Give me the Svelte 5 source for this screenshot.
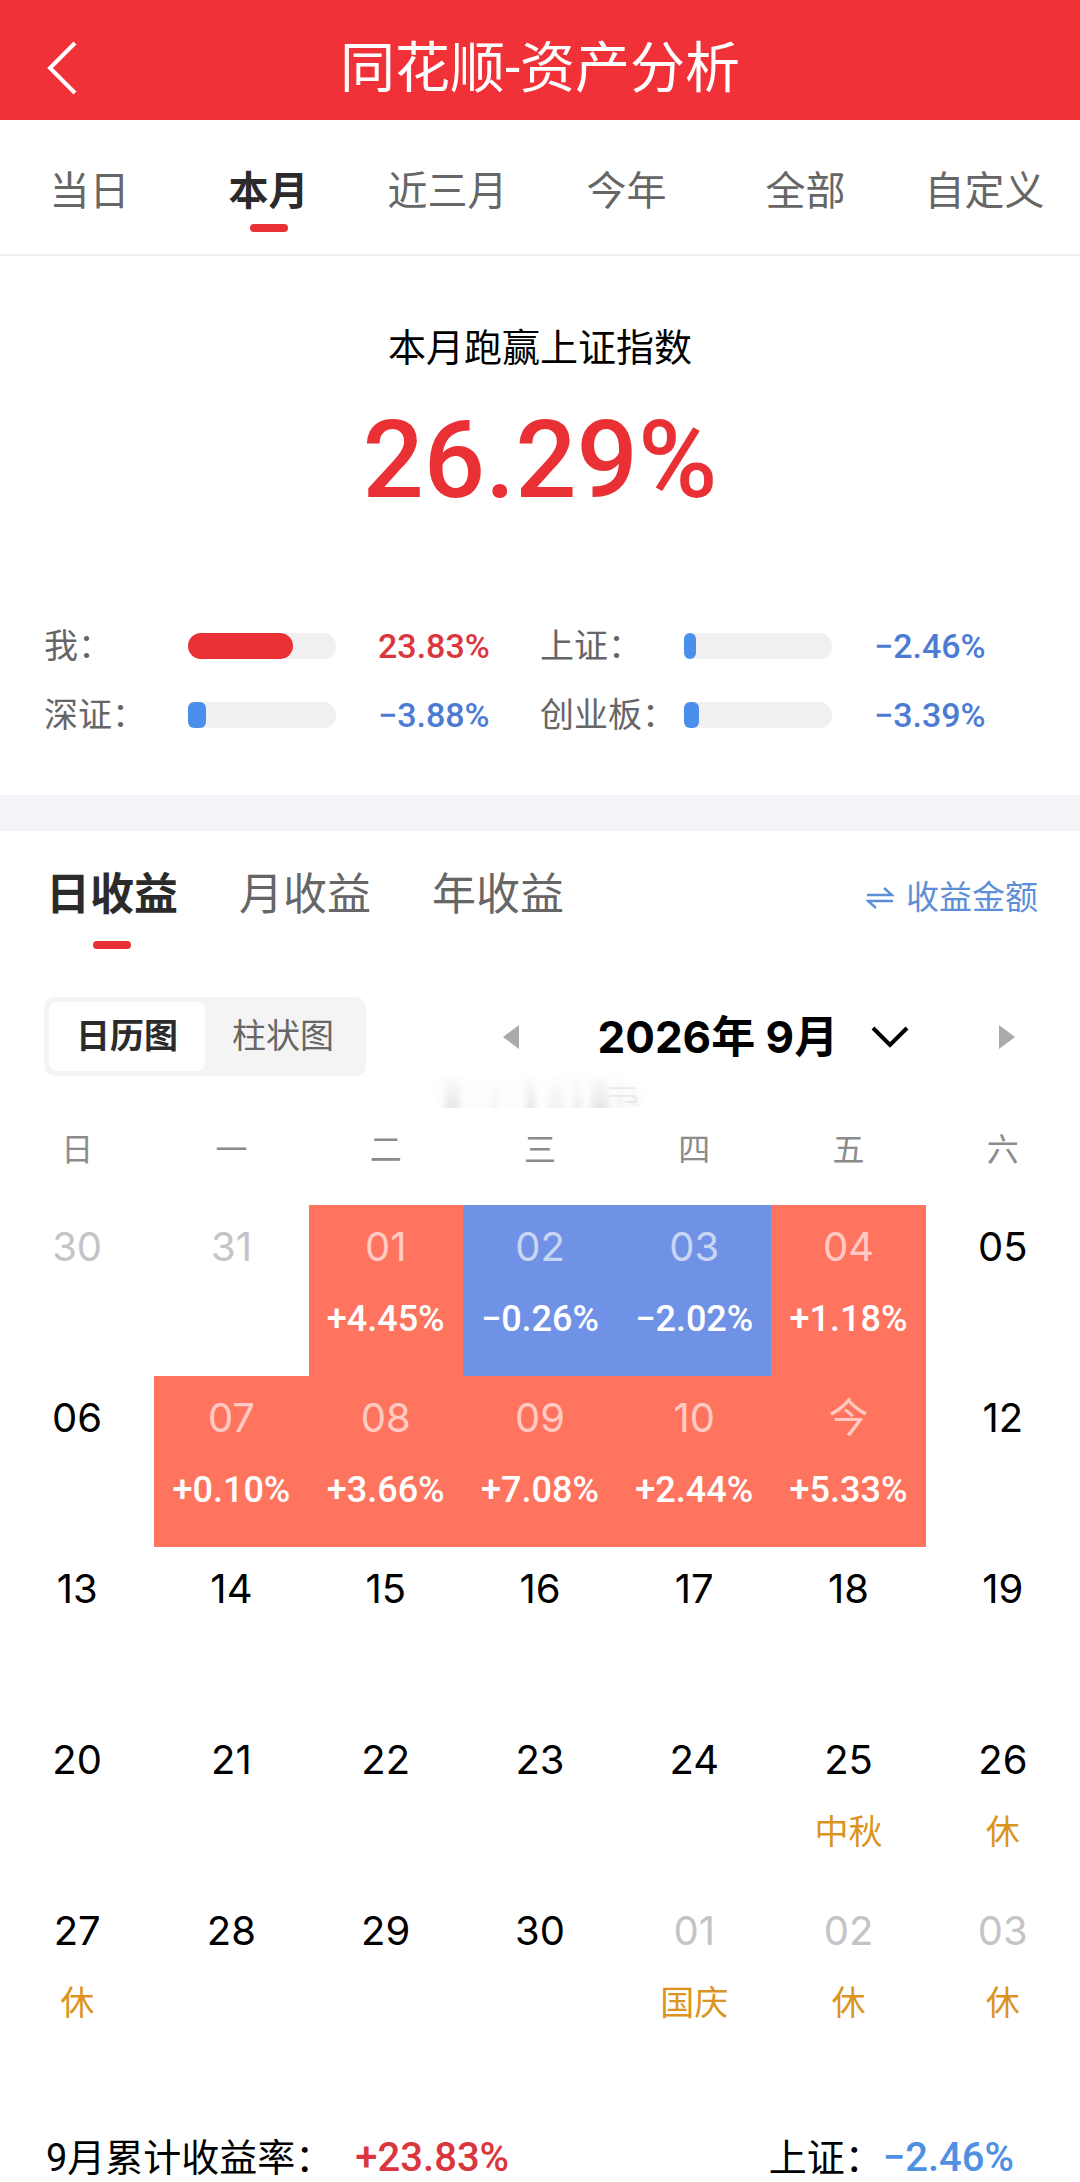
<script lang="ts">
	type Day = {
		label: string;
		rate?: string;
		note?: string;
		muted?: boolean;
	};

	const ranges = ['当日', '本月', '近三月', '今年', '全部', '自定义'];
	const periods = ['日收益', '月收益', '年收益'];
	const charts = ['日历图', '柱状图'];
	const weekdays = ['日', '一', '二', '三', '四', '五', '六'];

	// fill is the share of the track that is coloured, in percent
	const benchmarks = [
		{ name: '我', value: '23.83%', fill: 71 },
		{ name: '上证', value: '−2.46%', fill: 8 },
		{ name: '深证', value: '−3.88%', fill: 12 },
		{ name: '创业板', value: '−3.39%', fill: 10 }
	];

	const weeks: Day[][] = [
		[
			{ label: '30', muted: true },
			{ label: '31', muted: true },
			{ label: '01', rate: '+4.45%' },
			{ label: '02', rate: '−0.26%' },
			{ label: '03', rate: '−2.02%' },
			{ label: '04', rate: '+1.18%' },
			{ label: '05' }
		],
		[
			{ label: '06' },
			{ label: '07', rate: '+0.10%' },
			{ label: '08', rate: '+3.66%' },
			{ label: '09', rate: '+7.08%' },
			{ label: '10', rate: '+2.44%' },
			{ label: '今', rate: '+5.33%' },
			{ label: '12' }
		],
		['13', '14', '15', '16', '17', '18', '19'].map((label) => ({ label })),
		[
			{ label: '20' },
			{ label: '21' },
			{ label: '22' },
			{ label: '23' },
			{ label: '24' },
			{ label: '25', note: '中秋' },
			{ label: '26', note: '休' }
		],
		[
			{ label: '27', note: '休' },
			{ label: '28' },
			{ label: '29' },
			{ label: '30' },
			{ label: '01', note: '国庆', muted: true },
			{ label: '02', note: '休', muted: true },
			{ label: '03', note: '休', muted: true }
		]
	];

	let range = $state('本月');
	let period = $state('日收益');
	let chart = $state('日历图');
	let month = $state('2026-09');

	function isLoss(value: string) {
		return value.startsWith('−');
	}
</script>

<header class="topbar">
	<button class="back" aria-label="返回">
		<svg width="32" height="56" viewBox="0 0 32 56">
			<path d="M29 3 4 28l25 25" fill="none" stroke="currentColor" stroke-width="4" />
		</svg>
	</button>
	<h1>同花顺-资产分析</h1>
</header>

<nav class="ranges">
	{#each ranges as item}
		<button class:active={range === item} onclick={() => (range = item)}>{item}</button>
	{/each}
</nav>

<section class="summary">
	<p class="headline">本月跑赢上证指数</p>
	<p class="lead">26.29%</p>
	<div class="benchmarks">
		{#each benchmarks as item}
			<div class="benchmark" class:loss={isLoss(item.value)}>
				<span>{item.name}：</span>
				<div class="track">
					<div class="fill" style="width: {item.fill}%"></div>
				</div>
				<span class="value">{item.value}</span>
			</div>
		{/each}
	</div>
</section>

<section class="earnings">
	<div class="periods">
		{#each periods as item}
			<button class:active={period === item} onclick={() => (period = item)}>{item}</button>
		{/each}
		<a class="switch" href="#amount">
			<svg width="28" height="24" viewBox="0 0 28 24">
				<path
					d="M1 9h25L18 2M27 15H2l8 7"
					fill="none"
					stroke="currentColor"
					stroke-width="2.4"
				/>
			</svg>
			收益金额
		</a>
	</div>

	<div class="toolbar">
		<div class="segmented">
			{#each charts as item}
				<button class:active={chart === item} onclick={() => (chart = item)}>{item}</button>
			{/each}
		</div>
		<div class="months">
			<button aria-label="上个月">
				<svg width="18" height="26" viewBox="0 0 18 26">
					<path d="M17 1v24L1 13z" fill="currentColor" />
				</svg>
			</button>
			<div class="month">
				<select aria-label="月份" bind:value={month}>
					<option value="2026-09">2026年 9月</option>
				</select>
				<svg width="38" height="24" viewBox="0 0 38 24">
					<path d="m2 3 17 17L36 3" fill="none" stroke="currentColor" stroke-width="4" />
				</svg>
			</div>
			<button aria-label="下个月">
				<svg width="18" height="26" viewBox="0 0 18 26">
					<path d="M1 1v24l16-12z" fill="currentColor" />
				</svg>
			</button>
		</div>
	</div>

	<svg class="ghost" width="210" height="32" viewBox="0 0 210 32" aria-hidden="true">
		<defs>
			<linearGradient id="fade" x1="0" y1="0" x2="0" y2="1">
				<stop offset="0" stop-color="#999" stop-opacity="0.02" />
				<stop offset="1" stop-color="#999" stop-opacity="0.22" />
			</linearGradient>
			<filter id="soft" x="-5%" y="0" width="110%" height="100%">
				<feGaussianBlur stdDeviation="3 0" />
			</filter>
		</defs>
		<g fill="url(#fade)" filter="url(#soft)">
			<rect width="205" height="32" opacity="0.1" />
			<rect x="10" width="15" height="32" />
			<rect x="56" width="8" height="32" opacity="0.4" />
			<rect x="91" width="9" height="32" />
			<rect x="114" width="14" height="32" opacity="0.5" />
			<rect x="138" width="9" height="32" opacity="0.7" />
			<rect x="156" width="18" height="32" />
			<rect x="182" width="6" height="32" opacity="0.6" />
			<rect x="195" y="6" width="8" height="24" opacity="0.6" />
		</g>
		<path
			d="M174 12h26M174 20h24q6 3 2 6h-10"
			fill="none"
			stroke="#999"
			stroke-opacity="0.16"
			stroke-width="2"
		/>
	</svg>

	<table>
		<thead>
			<tr>
				{#each weekdays as day}
					<th scope="col">{day}</th>
				{/each}
			</tr>
		</thead>
		<tbody>
			{#each weeks as week}
				<tr>
					{#each week as day}
						<td
							class:muted={day.muted}
							class:up={day.rate && !isLoss(day.rate)}
							class:down={day.rate && isLoss(day.rate)}
						>
							<div class="day">{day.label}</div>
							{#if day.rate}
								<div class="rate">{day.rate}</div>
							{:else if day.note}
								<div class="note">{day.note}</div>
							{/if}
						</td>
					{/each}
				</tr>
			{/each}
		</tbody>
	</table>
</section>

<footer class="totals">
	<p>9月累计收益率：<strong class="gain">+23.83%</strong></p>
	<p>上证：<strong>−2.46%</strong></p>
</footer>

<style>
	:global(body) {
		margin: 0;
		background: #fff;
		color: #000;
		font-family: Roboto, 'Noto Sans CJK SC', sans-serif;
	}

	button,
	select {
		margin: 0;
		padding: 0;
		border: none;
		background: none;
		color: inherit;
		font: inherit;
		cursor: pointer;
	}

	h1,
	p {
		margin: 0;
		font-weight: 400;
	}

	svg {
		display: block;
	}

	.topbar {
		display: grid;
		grid-template-columns: 120px 1fr 120px;
		align-items: center;
		height: 104px;
		padding-top: 16px;
		background: #f13138;
		color: #fff;
	}

	.back {
		justify-self: start;
		padding-left: 46px;
	}

	h1 {
		font-size: 55px;
		line-height: 72px;
		text-align: center;
	}

	.ranges {
		display: grid;
		grid-template-columns: repeat(6, 1fr);
		padding: 50px 6px 22px 0;
		border-bottom: 2px solid #f0f0f0;
		color: #666;
		font-size: 40px;
		line-height: 44px;
	}

	.ranges button,
	.periods button {
		display: flex;
		flex-direction: column;
		align-items: center;
		white-space: nowrap;
	}

	.ranges button::after,
	.periods button::after {
		content: '';
		width: 38px;
		height: 8px;
		margin-top: 10px;
		border-radius: 4px;
	}

	.ranges .active,
	.periods .active {
		color: #2b2b2b;
		font-weight: 700;
	}

	.ranges .active::after,
	.periods .active::after {
		background: #e93135;
	}

	.summary {
		padding: 68px 44px 60px;
		border-bottom: 36px solid #f3f4f8;
	}

	.headline {
		font-size: 38px;
		line-height: 48px;
		text-align: center;
	}

	.lead {
		margin-top: 28px;
		color: #e93135;
		font-size: 108px;
		font-weight: 500;
		line-height: 120px;
		text-align: center;
	}

	.benchmarks {
		display: grid;
		grid-template-columns: 1fr 1fr;
		row-gap: 29px;
		margin-top: 106px;
	}

	.benchmark {
		display: grid;
		grid-template-columns: 144px 148px 1fr;
		align-items: center;
		color: #666;
		font-size: 34px;
		line-height: 40px;
		white-space: nowrap;
	}

	.track {
		height: 26px;
		border-radius: 13px;
		background: #f0f0f0;
	}

	.fill {
		height: 100%;
		border-radius: 13px;
		background: #e93135;
	}

	.loss .fill {
		border-radius: 6px;
		background: #4a8fec;
	}

	.value {
		padding-left: 42px;
		color: #d9363e;
		font-weight: 500;
	}

	.loss .value {
		color: #4c7bd4;
	}

	.periods {
		display: flex;
		align-items: baseline;
		gap: 61px;
		padding: 38px 42px 0 46px;
		color: #666;
		font-size: 44px;
		line-height: 52px;
	}

	.periods button::after {
		margin-top: 20px;
	}

	.switch {
		display: flex;
		align-items: center;
		gap: 12px;
		margin-left: auto;
		color: #5d8fd8;
		font-size: 33px;
		line-height: 40px;
		text-decoration: none;
	}

	.toolbar {
		display: flex;
		align-items: center;
		padding: 48px 64px 0 44px;
	}

	.segmented {
		display: flex;
		padding: 5px;
		border-radius: 10px;
		background: #f4f4f5;
		color: #666;
		font-size: 34px;
		line-height: 69px;
	}

	.segmented button {
		padding: 0 27px;
		border-radius: 8px;
	}

	.segmented .active {
		background: #fff;
		color: #2b2b2b;
		font-weight: 700;
	}

	.months {
		display: flex;
		flex: 1;
		align-items: center;
		justify-content: space-between;
		margin-left: 136px;
		color: #aaa;
	}

	.month {
		display: flex;
		align-items: center;
		gap: 32px;
		padding-right: 12px;
		color: #000;
	}

	select {
		appearance: none;
		font-family: Inter, 'Noto Sans CJK SC', sans-serif;
		font-size: 44px;
		font-weight: 700;
		line-height: 56px;
	}

	.ghost {
		margin: 0 auto;
	}

	table {
		width: 100%;
		border-collapse: collapse;
		table-layout: fixed;
		text-align: center;
	}

	th {
		padding: 18px 0 31px;
		color: #8c8c8c;
		font-size: 32px;
		font-weight: 400;
		line-height: 48px;
	}

	td {
		height: 153px;
		padding: 18px 0 0;
		vertical-align: top;
	}

	.day {
		font-family: Inter, 'Noto Sans CJK SC', sans-serif;
		font-size: 40px;
		line-height: 48px;
	}

	.muted .day {
		color: #c4c4c8;
	}

	.up {
		background: #ff745f;
	}

	.down {
		background: #6f91e6;
	}

	.up .day,
	.down .day {
		color: rgba(255, 255, 255, 0.65);
	}

	.rate,
	.note {
		margin-top: 28px;
		line-height: 40px;
	}

	.rate {
		color: #fff;
		font-size: 36px;
		font-weight: 500;
	}

	.note {
		color: #dc9420;
		font-size: 34px;
	}

	.totals {
		display: flex;
		justify-content: space-between;
		padding: 74px 66px 0 46px;
		font-size: 38px;
		line-height: 48px;
	}

	.totals strong {
		color: #4f90e3;
		font-size: 40px;
		font-weight: 500;
	}

	.totals .gain {
		margin-left: 22px;
		color: #d9363e;
	}
</style>
